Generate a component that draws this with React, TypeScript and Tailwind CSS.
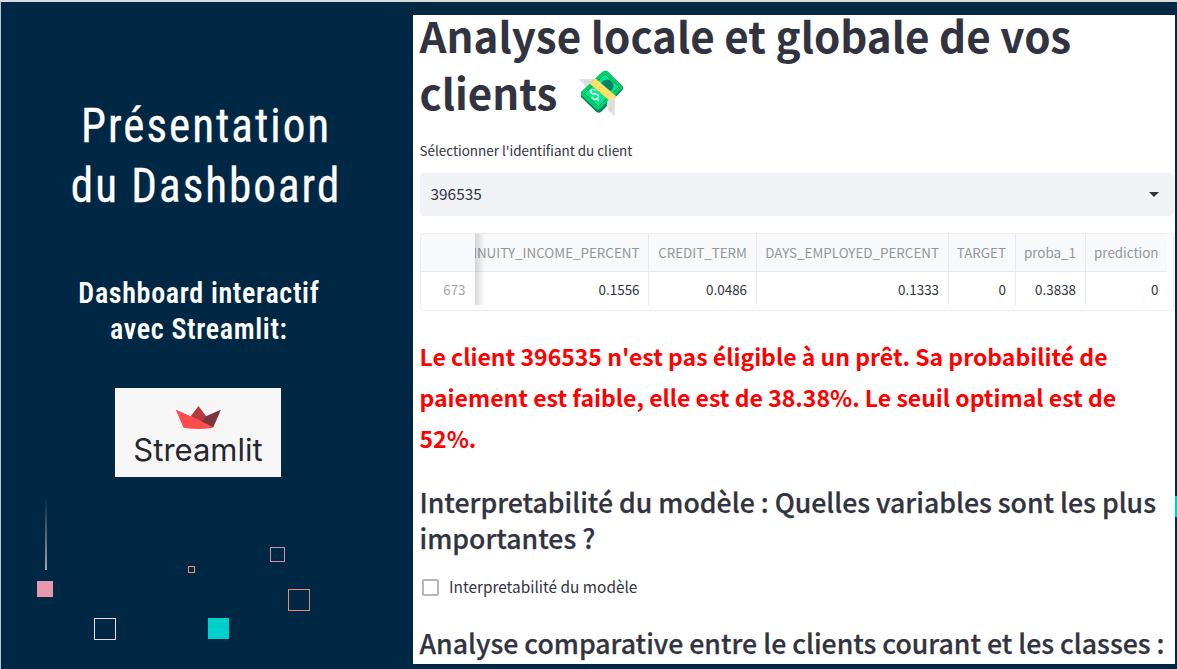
type Column = { label: string; value: string; width: string; clipped?: boolean };

const columns: Column[] = [
  { label: "INUITY_INCOME_PERCENT", value: "0.1556", width: "w-[174.500px]", clipped: true },
  { label: "CREDIT_TERM", value: "0.0486", width: "w-[107.500px]" },
  { label: "DAYS_EMPLOYED_PERCENT", value: "0.1333", width: "w-[192px]" },
  { label: "TARGET", value: "0", width: "w-[67px]" },
  { label: "proba_1", value: "0.3838", width: "w-[70px]" },
  { label: "prediction", value: "0", width: "w-[81.500px]" },
];

function StreamlitLogo() {
  return (
    <div className="flex h-[89px] w-[166px] flex-col items-center bg-[#f6f6f6] pt-[17px] font-['Inter',sans-serif]">
      <svg className="h-[25px] w-[46px] shrink-0" viewBox="0 0 46 25">
        <path d="M23.5 1 15.500 11.500 37.500 22 31 11Z" fill="#b33c41" />
        <path d="M1 5.200C.8 4.800 1.200 4.800 1.600 5L38.400 21.600Q38 22.800 36.800 23Q23 25 9.600 23Q8.600 22.700 8 21.400Z" fill="#ff4b4b" />
        <path d="M38.300 22.200 45.800 5Q46 4.500 45.200 4.900L31 11.200 27 16.500Z" fill="#7b353c" />
      </svg>
      <span className="text-[31px] leading-[39px] text-[#262730]">Streamlit</span>
    </div>
  );
}

function FlyingMoney() {
  return (
    <svg className="mt-[5px] ml-[20.500px] h-[50px] w-[48px]" viewBox="0 0 48 50">
      <path d="M1 10h25L17 23q-6-1-7.500-4.500Q5 17 5.500 14 2 13 1 10Z" fill="#e1e1e1" />
      <path d="M5 13h16M9 18h10" stroke="#cfcfcf" strokeWidth=".7" />
      <path d="M25.500 2.500q2-1.500 4 0L44.500 17q1 2 0 4L23 43q-2 1.500-4.500 0L3 28v-5Z" fill="#008463" />
      <path d="M24.500 2.500q2.500-1.500 5 0L44 17q1 1.500-.5 3L22 40q-2 1.500-4 0L3.500 26.500q-1-2 0-4Z" fill="#00d26a" />
      <path d="M27 5 41 18 20.500 37.500 6.500 24.500Z" fill="#04e98d" stroke="#008463" strokeWidth=".9" />
      <circle cx="29" cy="17" r="6.500" fill="#008463" />
      <path d="M11.500 14.500 17.500 9.500 38 27Q38 31.500 33 33Z" fill="#ffe165" />
      <path d="M34 28.500Q37 29 37 31V46.500Q34 46 33 43.500 29.500 43 29.500 39 28 36 29.500 32Z" fill="#e1e1e1" />
      <path d="M33 35v8" stroke="#c8c8c8" strokeWidth=".7" />
      <path d="M17.500 21.500q-3-2.200-4.300 0-1 2 1.500 3.500l2.300 0q3.500 0 3.500 2.500 0 3-3.500 2.800-2-.2-3-2M12 21.500l1.500 1.500M19 30l1.500 1.500" fill="none" stroke="#e6fff0" strokeWidth="1.400" strokeLinecap="round" />
    </svg>
  );
}

function Decorations() {
  return (
    <div aria-hidden="true">
      <div className="absolute top-[495px] left-[44px] h-[73px] w-[1.500px] bg-linear-to-b from-transparent to-[#a5a0b3]" />
      <div className="absolute top-[579px] left-[36px] size-4 bg-[#e898ac]" />
      <div className="absolute top-[615.500px] left-[93px] size-[22px] border-[1.500px] border-[#f3d5df]" />
      <div className="absolute top-[564px] left-[187px] size-[7px] border border-[#f5926f]" />
      <div className="absolute top-[545px] left-[269px] size-[14.500px] border border-[#d58ca6]" />
      <div className="absolute top-[587px] left-[287px] size-[21.500px] border border-[#e28d71]" />
      <div className="absolute top-[616px] left-[207px] size-[21px] bg-[#00d0cc]" />
      <div className="absolute top-[494px] left-[1174px] h-[21px] w-[2px] bg-[#00d0cc]" />
    </div>
  );
}

function ClientTable() {
  return (
    <div className="mt-[17px] flex h-[78px] w-[754px] overflow-hidden rounded-[4px] border border-[#ebecef] text-[13.400px] whitespace-nowrap">
      <div className="flex w-[54px] shrink-0 flex-col text-right text-[#a3a5ab]">
        <div className="h-[38px] border-b border-[#e8e9ec] bg-[#f8f9fb]" />
        <div className="h-[33px] pr-[9px] leading-[35px]">673</div>
      </div>
      {columns.map((c) => (
        <div
          key={c.label}
          className={`${c.width} relative flex h-[71px] shrink-0 flex-col border-r border-[#e8e9ec] text-right last:border-r-0`}
        >
          <div className="flex h-[38px] justify-end overflow-hidden border-b border-[#e8e9ec] bg-[#f8f9fb] pr-[8.500px] leading-[37px] text-[#94969d]">
            {c.label}
          </div>
          <div className="h-[33px] pr-[8.500px] leading-[35px] text-[#31333f]">{c.value}</div>
          {c.clipped && (
            <div className="absolute inset-y-0 left-0 w-[10px] bg-linear-to-r from-black/15 to-transparent" />
          )}
        </div>
      ))}
    </div>
  );
}

export default function App() {
  return (
    <div className="relative flex h-[669px] w-[1177px] overflow-hidden border-t-2 border-l border-t-[#d9dcdd] border-l-[#b9c4cb] bg-[#002845]">
      <aside className="flex w-[412px] shrink-0 flex-col items-center pr-[4px] text-center font-['Roboto',sans-serif] whitespace-nowrap text-white [font-stretch:75%]">
        <h1 className="mt-[94px] ml-[2px] scale-x-92 text-[49px] leading-[60px] tracking-[2.200px] [-webkit-text-stroke:0.300px_#ffffff]">
          Présentation
          <br />
          du Dashboard
        </h1>
        <p className="mt-[59px] mr-[13px] scale-x-95 text-[29.500px] leading-[36px] font-semibold tracking-[0.700px]">
          Dashboard interactif
          <br />
          avec Streamlit:
        </p>
        <div className="mt-[41px] mr-[14px]">
          <StreamlitLogo />
        </div>
      </aside>

      <main className="mt-[13px] flex h-[649px] w-[762px] flex-col overflow-hidden bg-white pl-[6.500px] font-['Noto_Sans_CJK_SC',sans-serif] whitespace-nowrap text-[#31333f]">
        <h1 className="-mt-[8px] h-[113px] shrink-0 text-[42.130px] leading-[56.500px] font-bold">
          Analyse locale et globale de vos
          <span className="flex">
            clients
            <FlyingMoney />
          </span>
        </h1>
        <div className="mt-[20px] h-5 shrink-0 text-[13.450px] leading-5">Sélectionner l'identifiant du client</div>
        <div className="mt-[13px] flex h-[42.500px] w-[754px] shrink-0 items-center justify-between rounded-[4px] bg-[#f0f2f6] pr-[15px] pl-[11px] text-[15.400px]">
          <span className="pb-[2px]">396535</span>
          <svg className="h-[5px] w-[10px]" viewBox="0 0 10 5">
            <path d="M0 0H10L5 5Z" fill="#31333f" />
          </svg>
        </div>
        <div className="h-[95px] shrink-0">
          <ClientTable />
        </div>
        <p className="mt-[25px] shrink-0 text-[23.020px] leading-[41.300px] font-bold text-[#ff0000]">
          Le client 396535 n'est pas éligible à un prêt. Sa probabilité de
          <br />
          paiement est faible, elle est de 38.38%. Le seuil optimal est de
          <br />
          52%.
        </p>
        <h2 className="mt-[24.500px] shrink-0 text-[26.650px] leading-[36px] font-medium [-webkit-text-stroke:0.250px_#31333f]">
          Interpretabilité du modèle : Quelles variables sont les plus
          <br />
          importantes ?
        </h2>
        <label className="mt-[19px] flex h-[24px] shrink-0 items-center gap-[10.500px] pl-[2px] text-[15.380px] leading-6">
          <span className="mt-px size-[17px] rounded-[2px] border-2 border-[#b4b6bc]" />
          <span className="pb-[2px]">Interpretabilité du modèle</span>
        </label>
        <h2 className="mt-[26px] shrink-0 text-[26.650px] leading-[36px] font-medium [-webkit-text-stroke:0.250px_#31333f]">
          Analyse comparative entre le clients courant et les classes :
        </h2>
      </main>
      <Decorations />
    </div>
  );
}
